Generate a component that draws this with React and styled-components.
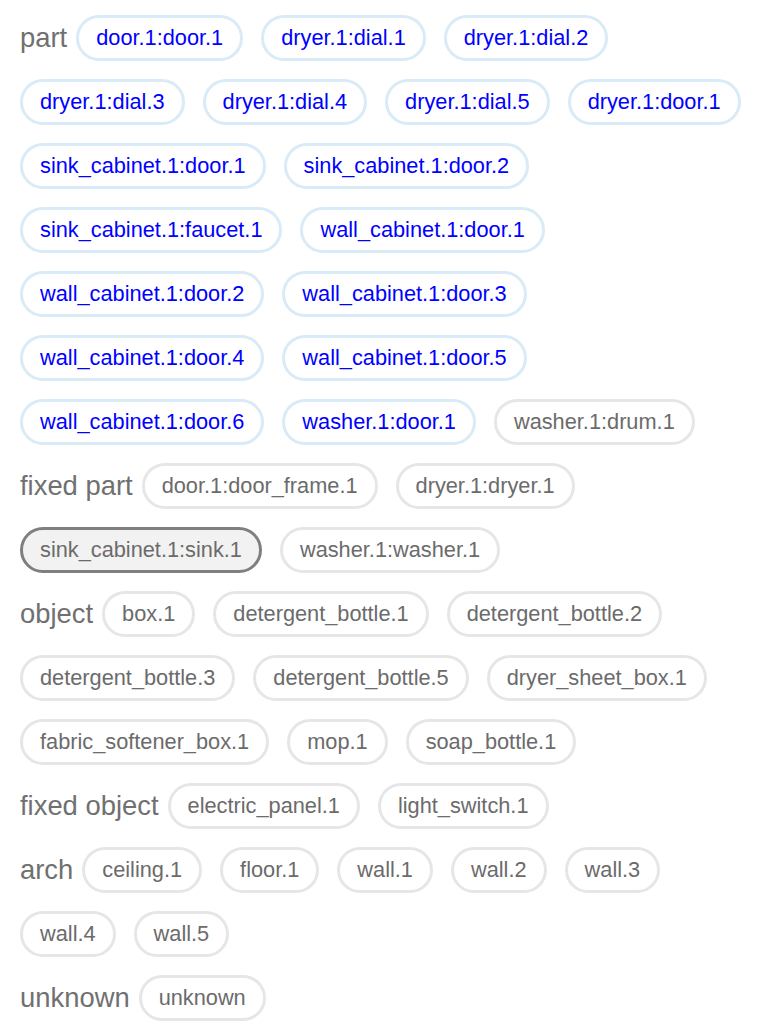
import React from "react";
import styled, { createGlobalStyle, css } from "styled-components";

const Global = createGlobalStyle`
  html, body { margin: 0; padding: 0; background: #fff; }
  body { font-family: "Liberation Sans", Arial, Helvetica, sans-serif; }
`;

const Page = styled.div`
  display: flex;
  flex-direction: column;
  gap: 18px;
  padding: 15px 20px;
  width: 782px;
  box-sizing: border-box;
`;

const Section = styled.div`
  display: flex;
  flex-wrap: wrap;
  align-items: center;
  gap: 18px;
`;

const Label = styled.span`
  font-size: 27.4px;
  color: #707070;
  margin-right: -9px;
  line-height: 30px;
`;

const Chip = styled.span`
  display: inline-flex;
  align-items: center;
  box-sizing: border-box;
  height: 46px;
  padding: 0 17px;
  border-radius: 23px;
  border: 3px solid #e6e6e6;
  font-size: 21.75px;
  line-height: 24px;
  color: #6b6b6b;
  background: #fff;
  white-space: nowrap;
  ${(p) =>
    p.$kind === "part" &&
    css`
      border-color: #d8ebf6;
      color: #0000ff;
    `}
  ${(p) =>
    p.$selected &&
    css`
      border-color: #7f7f7f;
      background: #f2f2f2;
    `}
`;

const data = [
  {
    label: "part",
    items: [
      ["door.1:door.1", "part"],
      ["dryer.1:dial.1", "part"],
      ["dryer.1:dial.2", "part"],
      ["dryer.1:dial.3", "part"],
      ["dryer.1:dial.4", "part"],
      ["dryer.1:dial.5", "part"],
      ["dryer.1:door.1", "part"],
      ["sink_cabinet.1:door.1", "part"],
      ["sink_cabinet.1:door.2", "part"],
      ["sink_cabinet.1:faucet.1", "part"],
      ["wall_cabinet.1:door.1", "part"],
      ["wall_cabinet.1:door.2", "part"],
      ["wall_cabinet.1:door.3", "part"],
      ["wall_cabinet.1:door.4", "part"],
      ["wall_cabinet.1:door.5", "part"],
      ["wall_cabinet.1:door.6", "part"],
      ["washer.1:door.1", "part"],
      ["washer.1:drum.1", "plain"],
    ],
  },
  {
    label: "fixed part",
    items: [
      ["door.1:door_frame.1"],
      ["dryer.1:dryer.1"],
      ["sink_cabinet.1:sink.1", "plain", true],
      ["washer.1:washer.1"],
    ],
  },
  {
    label: "object",
    items: [
      ["box.1"],
      ["detergent_bottle.1"],
      ["detergent_bottle.2"],
      ["detergent_bottle.3"],
      ["detergent_bottle.5"],
      ["dryer_sheet_box.1"],
      ["fabric_softener_box.1"],
      ["mop.1"],
      ["soap_bottle.1"],
    ],
  },
  {
    label: "fixed object",
    items: [["electric_panel.1"], ["light_switch.1"]],
  },
  {
    label: "arch",
    items: [
      ["ceiling.1"],
      ["floor.1"],
      ["wall.1"],
      ["wall.2"],
      ["wall.3"],
      ["wall.4"],
      ["wall.5"],
    ],
  },
  {
    label: "unknown",
    items: [["unknown"]],
  },
];

export default function App() {
  return (
    <>
      <Global />
      <Page>
        {data.map((sec) => (
          <Section key={sec.label}>
            <Label>{sec.label}</Label>
            {sec.items.map(([name, kind, selected]) => (
              <Chip key={name} $kind={kind} $selected={selected}>
                {name}
              </Chip>
            ))}
          </Section>
        ))}
      </Page>
    </>
  );
}
